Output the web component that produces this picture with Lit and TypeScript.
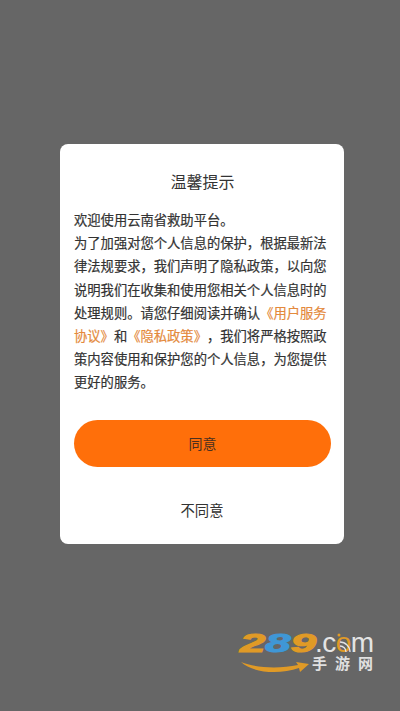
import { LitElement, html, css } from "lit";
import { customElement } from "lit/decorators.js";

@customElement("app-root")
export class AppRoot extends LitElement {
  static styles = css`
    :host {
      display: block;
      position: relative;
      width: 400px;
      height: 711px;
      overflow: hidden;
      background: #666666;
      font-family: "Noto Sans CJK SC", "Noto Sans", sans-serif;
      color: #333333;
      text-spacing-trim: space-all;
    }
    .page {
      padding: 144px 56px 0 60px;
    }
    .card {
      box-sizing: border-box;
      width: 284px;
      height: 400px;
      background: #ffffff;
      border-radius: 8px;
      padding: 24px 13px 0 14px;
      display: flex;
      flex-direction: column;
    }
    .title {
      margin: 0;
      font-size: 16px;
      font-weight: 400;
      line-height: 26px;
      text-align: center;
      color: #333333;
    }
    .body {
      margin: 14px 0 0;
      width: 254px;
      font-size: 13.3px;
      line-height: 23.2px;
      color: #333333;
      -webkit-text-stroke: 0.2px #333333;
    }
    .link {
      color: #e48a3c;
      -webkit-text-stroke: 0.2px #e48a3c;
    }
    .agree {
      margin-top: 26px;
      height: 47px;
      width: 257px;
      border-radius: 24px;
      background: #ff6f0a;
      display: flex;
      align-items: center;
      justify-content: center;
      font-size: 14px;
      color: #4a3020;
    }
    .refuse {
      margin-top: 26px;
      text-align: center;
      font-size: 14.3px;
      line-height: 34px;
      color: #333333;
      padding-right: 1px;
    }
    .mark {
      position: absolute;
      left: 240px;
      top: 628px;
      width: 140px;
      height: 48px;
      display: flex;
      flex-direction: column;
    }
    .mark-top {
      position: relative;
      display: flex;
      align-items: baseline;
      height: 30px;
      font-family: "Liberation Sans", sans-serif;
      font-weight: 700;
      line-height: 30px;
    }
    .digits {
      display: inline-block;
      width: 75px;
      font-size: 26px;
      font-style: italic;
      letter-spacing: 0;
      color: #e09a26;
      -webkit-text-stroke: 1.1px #e09a26;
      transform: scaleX(1.75);
      transform-origin: left center;
      white-space: nowrap;
    }
    .digits .eight {
      color: #3f97d6;
      -webkit-text-stroke: 1.1px #3f97d6;
    }
    .dotcom {
      font-size: 28px;
      font-weight: 400;
      color: #e4e4e4;
      letter-spacing: -0.5px;
      white-space: nowrap;
    }
    .dotcom .o {
      color: #e09a26;
    }
    .signal {
      position: absolute;
      left: 96px;
      top: 4px;
      width: 16px;
      height: 22px;
    }
    .mark-bottom {
      display: flex;
      align-items: flex-start;
      height: 18px;
    }
    .swoosh {
      width: 70px;
      height: 11px;
      flex: none;
      margin-top: 4px;
    }
    .cn {
      margin-left: 2px;
      margin-top: -4px;
      font-size: 15px;
      line-height: 17px;
      letter-spacing: 8px;
      font-weight: 700;
      color: #e0e0e0;
      white-space: nowrap;
    }
  `;

  render() {
    return html`
      <div class="page">
        <div class="card">
          <h1 class="title">温馨提示</h1>
          <p class="body">
            欢迎使用云南省救助平台。<br />为了加强对您个人信息的保护&#xFF0C;根据最新法律法规要求&#xFF0C;我们声明了隐私政策&#xFF0C;以向您说明我们在收集和使用您相关个人信息时的处理规则。请您仔细阅读并确认<span
              class="link"
              >《用户服务协议》</span
            >和<span class="link">《隐私政策》</span>&#xFF0C;我们将严格按照政策内容使用和保护您的个人信息&#xFF0C;为您提供更好的服务。
          </p>
          <div class="agree">同意</div>
          <div class="refuse">不同意</div>
        </div>
      </div>
      <div class="mark">
        <div class="mark-top">
          <span class="digits">2<span class="eight">8</span>9</span>
          <span class="dotcom">.c<span class="o">o</span>m</span>
          <svg class="signal" viewBox="0 0 16 22">
            <circle cx="3" cy="3" r="1.5" fill="#e09a26" />
            <path d="M4 14 A6 6 0 0 1 10 20 M4 10 A10 10 0 0 1 14 20" fill="none" stroke="#e4e4e4" stroke-width="1.3" />
          </svg>
        </div>
        <div class="mark-bottom">
          <svg class="swoosh" viewBox="0 0 68 11">
            <path d="M0 0 C14 6 38 7 57 3 L55 0 L68 2 L59 10 L58 6 C38 13 12 11 0 0 Z" fill="#e09a26" />
          </svg>
          <span class="cn">手游网</span>
        </div>
      </div>
    `;
  }
}
